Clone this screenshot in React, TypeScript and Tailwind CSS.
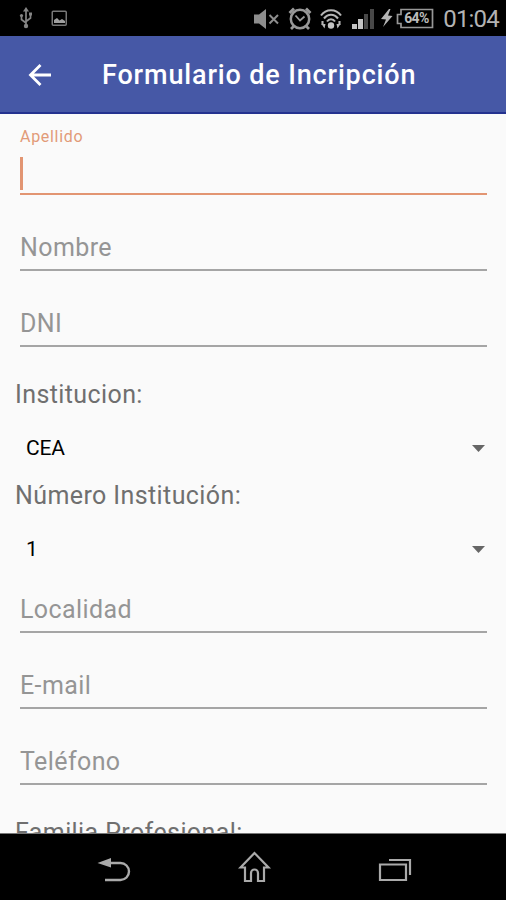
import type { ReactNode } from "react";

function StatusBar() {
  return (
    <div className="flex h-9 shrink-0 items-center bg-black pr-[7px] pl-[19px] text-[#a3a3a3]">
      <svg width="14" height="22" viewBox="0 0 14 22" fill="none" stroke="#858585" strokeWidth="1.7">
        <path d="M7 3v16M2.5 9v3.5L7 16M11.5 7.5v3.5L7 14.5" />
        <path d="M7 0l3 4.5H4z" fill="#858585" stroke="none" />
        <circle cx="7" cy="19" r="2.2" fill="#858585" stroke="none" />
        <circle cx="2.5" cy="8.5" r="1.6" fill="#858585" stroke="none" />
        <path d="M10 5.5h3v3h-3z" fill="#858585" stroke="none" />
      </svg>
      <svg className="ml-[18px]" width="17" height="17" viewBox="0 0 17 17" fill="none">
        <rect x="1.25" y="1.25" width="14" height="14" rx="1" stroke="#777" strokeWidth="1.5" />
        <path d="M3 13V10l3-2 2.5 2.5L11 9l3 2v2z" fill="#a0a0a0" />
      </svg>

      <div className="ml-auto flex items-center">
        <svg className="mt-px" width="27" height="22" viewBox="0 0 27 22">
          <path d="M1 6.500h5l7-5.500v20l-7-5.500H1z" fill="#8d8d8d" />
          <path d="M16.500 7l8.500 8.500M25 7l-8.500 8.500" stroke="#8d8d8d" strokeWidth="2" />
        </svg>
        <svg className="mt-px ml-[8px]" width="24" height="24" viewBox="0 0 24 24" fill="none" stroke="#999" strokeWidth="2.500">
          <circle cx="12" cy="12" r="9.200" />
          <path d="M7.500 8.500l4.500 5 4.500-4" strokeWidth="1.800" />
          <path d="M1.500 6l4.500-4.500M22.500 6L18 1.500M5.500 19.500L3 22M18.500 19.500L21 22" strokeWidth="2.800" />
        </svg>
        <svg className="mt-[2px] ml-[8px]" width="22" height="22" viewBox="0 0 22 22" fill="none" stroke="#b5b5b5" strokeWidth="2.100">
          <path d="M1 7.500C6 .5 16 .5 21 7.500M4 10.500c4-5 10-5 14 0M7 13.500c2-3 6-3 8 0" />
          <circle cx="11" cy="17.500" r="3.200" fill="#c4c4c4" stroke="none" />
          <path d="M2.500 13v4M19.500 13v4" />
          <path d="M1.500 16h4l-1 4.500zM20.500 16h-4l1 4.500z" fill="#b5b5b5" stroke="none" />
        </svg>
        <svg className="mt-px ml-[10px]" width="23" height="20" viewBox="0 0 23 20">
          <path d="M0 15h5v5H0zM6 10h5v10H6z" fill="#c4c4c4" />
          <path d="M12 5h4v15h-4zM18 0h4v20h-4z" fill="#484848" />
        </svg>
        <svg className="ml-[6px]" width="12" height="18" viewBox="0 0 12 18">
          <path d="M8 0L0 10l5 .5L2 18l9.500-11L7 6.500 9.500 0z" fill="#b5b5b5" />
        </svg>
        <div className="relative ml-[3px] h-[21px] w-[38px]">
          <svg width="38" height="21" viewBox="0 0 38 21" fill="none">
            <path d="M5 1.500h31.500v18H5v-4H1.500v-9H5z" stroke="#979797" strokeWidth="1.700" />
          </svg>
          <span className="absolute top-0 left-[8px] text-[14px] leading-[21px] font-bold tracking-[-0.7px] text-[#bbb]">64%</span>
        </div>
        <span className="ml-[9px] pt-px text-[24px] leading-9 tracking-[-0.8px] text-[#b3b3b3]">01:04</span>
      </div>
    </div>
  );
}

function Field({ label, className = "mt-[22px]" }: { label: string; className?: string }) {
  return (
    <div className={`mr-[19px] ml-5 h-[54px] shrink-0 border-b-2 border-[#a5a5a5] pt-[14px] text-[25px] leading-[34px] tracking-[0.4px] text-[#959595] ${className}`}>
      {label}
    </div>
  );
}

function SectionLabel({ children, className = "" }: { children: ReactNode; className?: string }) {
  return (
    <div className={`shrink-0 pt-px pl-[15px] text-[25px] leading-[33px] tracking-[0.4px] whitespace-nowrap text-[#6f6f6f] ${className}`}>
      {children}
    </div>
  );
}

function Spinner({ value }: { value: string }) {
  return (
    <div className="flex h-[67px] shrink-0 items-center justify-between pt-[7px] pr-[21px] pl-[26px] text-[21px] text-black">
      <span className="pt-px tracking-[-0.2px]">{value}</span>
      <svg width="13" height="7" viewBox="0 0 13 7">
        <path d="M0 0h13L6.500 7z" fill="#666" />
      </svg>
    </div>
  );
}

function NavBar() {
  return (
    <div className="flex h-[67px] shrink-0 items-center justify-between border-t border-[#777] bg-black pt-[5px] pr-[94px] pl-[97px]">
      <svg width="34" height="26" viewBox="0 0 34 26" fill="none" stroke="#aaa" strokeWidth="2.400">
        <path d="M12 6h11.500a8.200 8.200 0 0 1 0 17H8" />
        <path d="M0.500 6l13.500-5v9.500z" fill="#aaa" stroke="none" />
      </svg>
      <svg className="mb-[6px]" width="34" height="32" viewBox="0 0 34 32" fill="none" stroke="#aaa" strokeWidth="2.200">
        <path d="M16.500 2L2.500 16.500H7V30h6v-8a3.500 3.500 0 0 1 7 0v8h6V16.500h4.500z" />
      </svg>
      <svg width="34" height="24" viewBox="0 0 34 24" fill="none" stroke="#aaa" strokeWidth="2.200">
        <path d="M2 6.500h26v15.500H2z" />
        <path d="M11 2h21v15" />
      </svg>
    </div>
  );
}

export default function App() {
  return (
    <div className="flex h-[900px] w-[506px] flex-col overflow-hidden bg-[#fafafa] font-['Roboto',sans-serif]">
      <StatusBar />

      <header className="flex h-[78px] shrink-0 items-center border-b-2 border-[#24328f] bg-[#4658a6] pt-[2px] pl-[28px] text-white">
        <svg width="24" height="24" viewBox="0 0 24 24" fill="none" stroke="currentColor" strokeWidth="2.800">
          <path d="M23 12H3M12.500 2L2.500 12l10 10" />
        </svg>
        <h1 className="ml-[50px] text-[27px] leading-9 font-medium tracking-[0.85px] whitespace-nowrap">Formulario de Incripción</h1>
      </header>

      <main className="flex min-h-0 flex-1 flex-col overflow-hidden">
        {/* Focused field with floating label */}
        <div className="mr-[19px] ml-5 h-[81px] shrink-0 border-b-2 border-[#e29572]">
          <div className="pt-[13px] text-[16px] leading-5 tracking-[0.7px] text-[#e29a78]">Apellido</div>
          <div className="mt-[10px] h-[33px] w-[3px] bg-[#e29572]" />
        </div>
        <Field label="Nombre" />
        <Field label="DNI" />

        <SectionLabel className="mt-[30px]">Institucion:</SectionLabel>
        <Spinner value="CEA" />
        <SectionLabel>Número Institución:</SectionLabel>
        <Spinner value="1" />

        <Field label="Localidad" className="mt-0" />
        <Field label="E-mail" />
        <Field label="Teléfono" />
        <SectionLabel className="mt-[30px]">Familia Profesional:</SectionLabel>
      </main>

      <NavBar />
    </div>
  );
}
